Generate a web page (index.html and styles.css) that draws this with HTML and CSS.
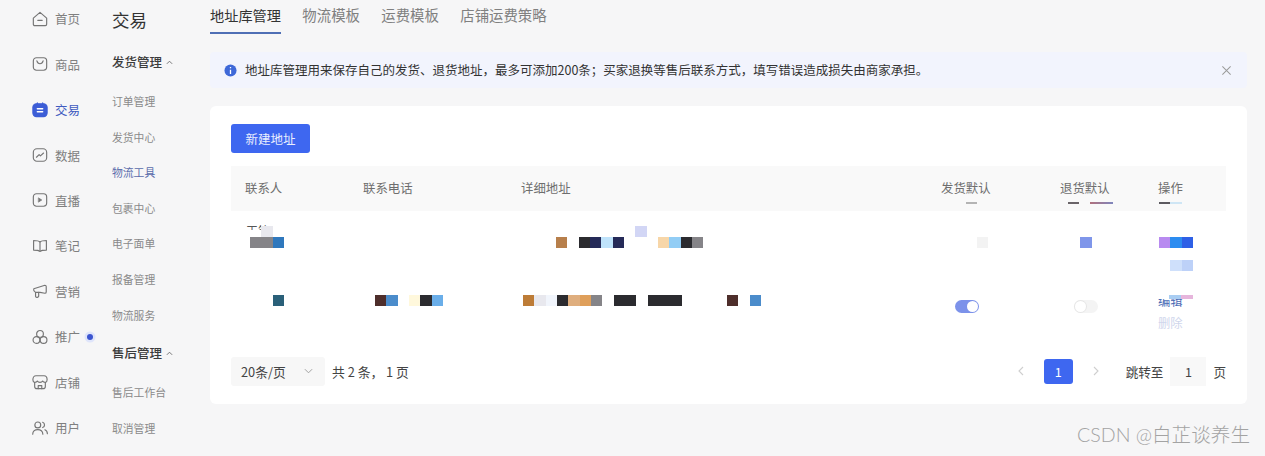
FILE: index.html
```html
<!DOCTYPE html>
<html lang="en">
<head>
    <meta charset="UTF-8">
    <meta name="viewport" content="width=device-width, initial-scale=1.0">
    <title>地址库管理</title>
    <link rel="stylesheet" href="styles.css">
</head>
<body>
    <div class="app">
        <!-- Left rail -->
        <nav class="rail">
            <a class="rail-item"><svg viewBox="0 0 18 18"><path d="M1.5 8 9 1.5 16.5 8v7a1.5 1.5 0 0 1-1.5 1.5H3A1.5 1.5 0 0 1 1.5 15z"/><path d="M6.5 10.5h5"/></svg>首页</a>
            <a class="rail-item"><svg viewBox="0 0 18 18"><rect x="1.5" y="2" width="15" height="14" rx="3.5"/><path d="M5.5 5.5c.6 2.2 1.8 3.2 3.5 3.2s2.9-1 3.5-3.2"/></svg>商品</a>
            <a class="rail-item active"><svg viewBox="0 0 18 18"><rect class="solid" x="1" y="2" width="16" height="14.5" rx="4"/><path class="bars" d="M6 7.5h6M6 11h6"/><path class="solid-line" d="M6 1v2M12 1v2"/></svg>交易</a>
            <a class="rail-item"><svg viewBox="0 0 18 18"><rect x="1.5" y="2" width="15" height="14" rx="4"/><path d="M5 11.5 8 8.5l1.5 1.5L13 6.8"/></svg>数据</a>
            <a class="rail-item"><svg viewBox="0 0 18 18"><rect x="1.5" y="2" width="15" height="14" rx="3.5"/><path class="tri" d="M7.5 6.8 11 9l-3.5 2.2z"/></svg>直播</a>
            <a class="rail-item"><svg viewBox="0 0 18 18"><path d="M9 4.5C7.5 3 5 2.8 1.800 2.8v10.800C5 13.600 7.5 13.800 9 15c1.5-1.200 4-1.400 7.200-1.400V2.800C13 2.800 10.500 3 9 4.500z"/><path d="M9 4.5V15"/></svg>笔记</a>
            <a class="rail-item"><svg viewBox="0 0 18 18"><path d="M2 6.5 14.5 2.500c1 0 1.500 .5 1.500 1.500v6c0 1-.5 1.500-1.500 1.500L9 10.500H5C3 10.500 1.500 8.500 2 6.500z"/><path d="M4 10.500V15c0 1 1.500 1.500 2.500 1l1-1V10.500"/></svg>营销</a>
            <a class="rail-item"><svg viewBox="0 0 18 18"><circle cx="9" cy="5.5" r="3.8"/><circle cx="5" cy="12.3" r="3.8"/><circle cx="13" cy="12.3" r="3.8"/></svg>推广<i class="dot"></i></a>
            <a class="rail-item"><svg viewBox="0 0 18 18"><path d="M4.500 2h9c2 0 3.500 2 3.500 4.500 0 1.500-1 2.800-2 3V14a2.500 2.500 0 0 1-2.500 2.500h-7A2.500 2.500 0 0 1 3 14V9.500c-1-.2-2-1.500-2-3C1 4 2.500 2 4.500 2z"/><path d="M3 9.500c1.500 0 2.500-.5 3-1.500.5 1 1.500 1.500 3 1.500s2.500-.5 3-1.500c.5 1 1.500 1.500 3 1.500M7 16.500v-3.500h4v3.500"/></svg>店铺</a>
            <a class="rail-item"><svg viewBox="0 0 18 18"><circle cx="6.5" cy="5.5" r="3.3"/><path d="M.8 16c0-3.500 2.500-5.200 5.700-5.200s5.700 1.700 5.700 5.200"/><path d="M12 2.500a3.200 3.200 0 0 1 0 6M14.500 11c1.800.8 2.800 2.400 2.800 4.500"/></svg>用户</a>
        </nav>

        <!-- Second level menu -->
        <aside class="submenu">
            <h2>交易</h2>
            <h3 class="group">发货管理<svg class="caret" viewBox="0 0 8 5"><path d="M1 4 4 1l3 3"/></svg></h3>
            <a>订单管理</a>
            <a>发货中心</a>
            <a class="current">物流工具</a>
            <a>包裹中心</a>
            <a>电子面单</a>
            <a>报备管理</a>
            <a>物流服务</a>
            <h3 class="group">售后管理<svg class="caret" viewBox="0 0 8 5"><path d="M1 4 4 1l3 3"/></svg></h3>
            <a>售后工作台</a>
            <a>取消管理</a>
        </aside>

        <main class="main">
            <div class="tabs">
                <a class="tab active">地址库管理</a>
                <a class="tab">物流模板</a>
                <a class="tab">运费模板</a>
                <a class="tab">店铺运费策略</a>
            </div>

            <div class="notice">
                <svg class="info" viewBox="0 0 14 14"><circle cx="7" cy="7" r="6.5"/><path d="M7 3.3v1.400M7 6.200v4.500"/></svg>
                <span>地址库管理用来保存自己的发货、退货地址，最多可添加200条；买家退换等售后联系方式，填写错误造成损失由商家承担。</span>
                <svg class="close" viewBox="0 0 12 12"><path d="M1.5 1.5l9 9M10.5 1.5l-9 9"/></svg>
            </div>

            <section class="card">
                <button class="btn-primary">新建地址</button>

                <div class="table-head">
                    <span class="col-name">联系人</span>
                    <span class="col-phone">联系电话</span>
                    <span class="col-addr">详细地址</span>
                    <span class="col-send">发货默认<i class="dash dash-send"></i></span>
                    <span class="col-back">退货默认<i class="dash dash-back1"></i><i class="dash dash-back2"></i></span>
                    <span class="col-op">操作<i class="dash dash-op1"></i><i class="dash dash-op2"></i></span>
                </div>

                <!-- Rows are blurred with mosaic tiles in the original -->
                <div class="row row-one">
                    <div class="col-name cell">
                        <div class="scrap">王笔</div>
                        <div class="mosaic"><i class="gap"></i><i class="m-mist"></i></div>
                        <div class="mosaic"><i class="m-grey"></i><i class="m-grey"></i><i class="m-blue"></i></div>
                    </div>
                    <div class="col-phone cell"></div>
                    <div class="col-addr cell">
                        <div class="mosaic"><i class="gap"></i><i class="gap"></i><i class="gap"></i><i class="gap"></i><i class="gap"></i><i class="gap"></i><i class="gap"></i><i class="gap"></i><i class="gap"></i><i class="gap"></i><i class="m-lilac"></i></div>
                        <div class="mosaic"><i class="gap"></i><i class="gap"></i><i class="gap"></i><i class="m-tan"></i><i class="gap"></i><i class="m-dark"></i><i class="m-navy"></i><i class="m-sky"></i><i class="m-navy"></i><i class="gap"></i><i class="gap"></i><i class="gap"></i><i class="m-peach"></i><i class="m-cyan"></i><i class="m-dark"></i><i class="m-grey"></i></div>
                    </div>
                    <div class="col-send cell"><div class="mosaic"><i class="gap"></i><i class="gap"></i><i class="gap"></i><i class="m-faint"></i></div></div>
                    <div class="col-back cell"><div class="mosaic"><i class="gap"></i><i class="m-peri"></i></div></div>
                    <div class="col-op cell">
                        <div class="mosaic"><i class="m-purple"></i><i class="m-azure"></i><i class="m-royal"></i></div>
                        <div class="mosaic"><i class="gap"></i><i class="m-pale"></i><i class="m-pale2"></i></div>
                    </div>
                </div>

                <div class="row row-two">
                    <div class="col-name cell"><div class="mosaic"><i class="gap"></i><i class="gap"></i><i class="m-teal"></i></div></div>
                    <div class="col-phone cell"><div class="mosaic"><i class="m-brown"></i><i class="m-blue2"></i><i class="gap"></i><i class="m-cream"></i><i class="m-dark"></i><i class="m-sky2"></i></div></div>
                    <div class="col-addr cell"><div class="mosaic"><i class="m-tan2"></i><i class="m-mist"></i><i class="m-ice"></i><i class="m-dark"></i><i class="m-sand"></i><i class="m-amber"></i><i class="m-grey"></i><i class="gap"></i><i class="m-dark"></i><i class="m-dark"></i><i class="gap"></i><i class="m-dark"></i><i class="m-dark"></i><i class="m-dark"></i><i class="gap"></i><i class="gap"></i><i class="gap"></i><i class="gap"></i><i class="m-brown"></i><i class="gap"></i><i class="m-blue2"></i></div></div>
                    <div class="col-send cell"><div class="switch on"><b></b></div></div>
                    <div class="col-back cell"><div class="switch"><b></b></div></div>
                    <div class="col-op cell ops">
                        <div class="op-cover"><i class="gap"></i><i class="c-blue"></i><i class="c-pink"></i></div>
                        <a class="op-edit">编辑</a>
                        <a class="op-del">删除</a>
                    </div>
                </div>

                <div class="pager">
                    <div class="size-select">20条/页<svg viewBox="0 0 10 6"><path d="M1 1l4 4 4-4"/></svg></div>
                    <span class="total">共 2 条， 1 页</span>
                    <div class="pages">
                        <svg class="arrow" viewBox="0 0 6 10"><path d="M5 1 1 5l4 4"/></svg>
                        <a class="page-num">1</a>
                        <svg class="arrow" viewBox="0 0 6 10"><path d="M1 1l4 4-4 4"/></svg>
                        <span class="jump">跳转至</span>
                        <span class="jump-input">1</span>
                        <span>页</span>
                    </div>
                </div>
            </section>
        </main>
    </div>

    <div class="watermark">CSDN @白芷谈养生</div>
</body>
</html>
```

FILE: styles.css
```css
* {
    box-sizing: border-box;
}
html, body {
    height: 100%;
}
body {
    margin: 0;
    background: #f6f6f7;
    color: #333;
    font-family: "Noto Sans CJK SC", "Noto Sans", sans-serif;
    overflow: hidden;
    position: relative;
}
.app {
    display: flex;
    height: 456px;
    overflow: hidden;
}

/* left rail */
.rail {
    width: 112px;
    flex: none;
    padding: 0 0 0 32px;
    display: flex;
    flex-direction: column;
}
.rail-item {
    height: 45.44px;
    flex: none;
    display: flex;
    align-items: center;
    font-size: 12.5px;
    color: #7f7f7f;
    position: relative;
    top: -4px;
}
.rail-item svg {
    width: 16px;
    height: 16px;
    margin-right: 7px;
    fill: none;
    stroke: #757575;
    stroke-width: 1.3;
    stroke-linecap: round;
    stroke-linejoin: round;
}
.rail-item.active {
    color: #3f5bc0;
}
.rail-item .solid {
    fill: #3c5dd6;
    stroke: #3c5dd6;
}
.rail-item .solid-line {
    stroke: #3c5dd6;
}
.rail-item .bars {
    stroke: #fff;
    stroke-width: 1.6;
}
.rail-item .tri {
    fill: #757575;
    stroke-width: .8;
}
.dot {
    position: absolute;
    left: 55px;
    top: 20px;
    width: 6px;
    height: 6px;
    border-radius: 50%;
    background: #3c55d0;
    box-shadow: 0 0 0 2.5px #dfe5fb;
}

/* second menu */
.submenu {
    width: 98px;
    flex: none;
    display: flex;
    flex-direction: column;
}
.submenu h2 {
    margin: 6px 0 0;
    font-size: 17.5px;
    line-height: 28px;
    font-weight: 400;
    color: #333;
}
.submenu .group {
    margin: 2px 0 22px;
    font-size: 12.5px;
    line-height: 18px;
    font-weight: 500;
    color: #3b3b3b;
    display: flex;
    align-items: center;
}
.submenu h2 + .group {
    margin: 19px 0 22px;
}
.caret {
    width: 7px;
    height: 5px;
    margin-left: 4px;
    fill: none;
    stroke: #666;
    stroke-width: 1;
}
.submenu a {
    height: 35.6px;
    flex: none;
    font-size: 10.8px;
    line-height: 16px;
    color: #8a8a8a;
}
.submenu a.current {
    color: #5a6cab;
}

/* main column */
.main {
    width: 1037px;
    flex: none;
    display: flex;
    flex-direction: column;
}
.tabs {
    display: flex;
    gap: 21.4px;
    height: 34px;
    flex: none;
}
.tab {
    font-size: 14.4px;
    line-height: 30px;
    color: #808080;
    height: 34px;
}
.tab.active {
    font-size: 14.2px;
    color: #333;
    border-bottom: 2px solid #4f6fb5;
}

.notice {
    margin-top: 18px;
    height: 36px;
    flex: none;
    background: #f2f4fd;
    border-radius: 4px;
    display: flex;
    align-items: center;
    padding: 0 15px 0 14px;
    font-size: 12.5px;
    color: #333;
}
.info {
    width: 13px;
    height: 13px;
    flex: none;
    margin-right: 8px;
}
.info circle {
    fill: #3e68d8;
}
.info path {
    stroke: #fff;
    stroke-width: 1.4;
}
.notice span {
    flex: 1;
    position: relative;
    top: -1px;
}
.close {
    width: 11px;
    height: 11px;
    fill: none;
    stroke: #9a9a9a;
    stroke-width: 1.1;
}

.card {
    margin-top: 18px;
    height: 298px;
    flex: none;
    background: #fff;
    border-radius: 6px;
    padding: 18px 21px 0;
    display: flex;
    flex-direction: column;
    position: relative;
}
.btn-primary {
    width: 79px;
    height: 29px;
    flex: none;
    border: 0;
    border-radius: 3px;
    padding: 0;
    background: #3e67f0;
    color: #e9eefe;
    font: 12.5px "Noto Sans CJK SC", sans-serif;
}

/* table, columns share the same widths */
.table-head, .row {
    display: flex;
    width: 995px;
    padding-left: 14px;
}
.col-name { width: 118px; flex: none; }
.col-phone { width: 158px; flex: none; }
.col-addr { width: 420px; flex: none; }
.col-send { width: 119px; flex: none; }
.col-back { width: 98px; flex: none; }
.col-op { width: 82px; flex: none; }

.table-head {
    margin-top: 13px;
    height: 45px;
    flex: none;
    padding-bottom: 2px;
    align-items: center;
    background: #f9f9f9;
    font-size: 12.4px;
    color: #6e6e6e;
}
.table-head span {
    position: relative;
}

/* leftovers of text showing below the mosaic */
.dash {
    position: absolute;
    top: 23px;
    height: 2px;
}
.dash-send { left: 25px; width: 11px; background: #b4b4b4; }
.dash-back1 { left: 8px; width: 11px; background: #6a6468; }
.dash-back2 { left: 30px; width: 23px; background: linear-gradient(90deg, #b0707c, #7f86bd); }
.dash-op1 { left: 1px; width: 11px; background: #5c5a60; }
.dash-op2 { left: 12px; width: 12px; background: #cfe6f5; }

.row {
    flex: none;
}
.row-one {
    height: 65px;
    padding-top: 14.7px;
}
.row-two {
    height: 76px;
    padding-top: 18.5px;
}
.cell {
    display: flex;
    flex-direction: column;
    position: relative;
}

/* mosaic tiles */
.mosaic {
    display: flex;
    height: 11.33px;
    flex: none;
    position: relative;
}
.mosaic i {
    width: 11.33px;
    height: 11.33px;
    flex: none;
}
.col-name .mosaic {
    margin-left: 5px;
}
.scrap {
    position: absolute;
    left: 1px;
    top: -2px;
    font-size: 12px;
    line-height: 14px;
    color: #555;
}
.scrap::after {
    content: "";
    position: absolute;
    left: -2px;
    top: 6px;
    width: 30px;
    height: 10px;
    background: #fff;
}
.col-addr .mosaic {
    margin-left: 1px;
}
.row-one .col-send,
.row-one .col-back,
.row-one .col-op {
    padding-top: 11.33px;
}
.row-one .col-send .mosaic {
    margin-left: 2px;
}
.row-one .col-back .mosaic {
    margin-left: 9px;
}
.row-one .col-op .mosaic {
    margin-left: 1px;
}
.row-one .col-op .mosaic + .mosaic {
    margin-top: 11.3px;
}
.row-two .col-phone .mosaic {
    margin-left: 12px;
}
.row-two .col-addr .mosaic {
    margin-left: 2px;
}
.gap { background: transparent; }
.m-grey { background: #858488; }
.m-blue { background: #2f78bd; }
.m-lilac { background: #d2d6f5; }
.m-tan { background: #b77f4b; }
.m-dark { background: #2b2b2f; }
.m-navy { background: #252a58; }
.m-sky { background: #bfe3fb; }
.m-peach { background: #f7d6a8; }
.m-cyan { background: #92cdf5; }
.m-faint { background: #f3f3f3; }
.m-peri { background: #7f96ea; }
.m-purple { background: #b88af0; }
.m-azure { background: #2c8cf0; }
.m-royal { background: #2e60e6; }
.m-pale { background: #cfe0fb; }
.m-pale2 { background: #bdd1f8; }
.m-teal { background: #2a6079; }
.m-brown { background: #4e2e2b; }
.m-blue2 { background: #4b8ccb; }
.m-cream { background: #fff8dc; }
.m-sky2 { background: #6aaee9; }
.m-tan2 { background: #bd7c37; }
.m-mist { background: #e8e8ee; }
.m-ice { background: #f1f5fc; }
.m-sand { background: #dfae7e; }
.m-amber { background: #df9f5a; }

/* switches */
.switch {
    width: 24px;
    height: 13px;
    border-radius: 7px;
    background: #f4f4f4;
    margin: 5px 0 0 14px;
    position: relative;
}
.switch b {
    position: absolute;
    left: 1px;
    top: 1px;
    width: 11px;
    height: 11px;
    border-radius: 50%;
    background: #fff;
    box-shadow: 0 0 0 1px #e6e6e6;
}
.switch.on {
    background: #7c92ea;
}
.switch.on b {
    left: 12px;
    box-shadow: none;
}
.ops {
    font-size: 12.3px;
    line-height: 12px;
}
.op-cover {
    position: absolute;
    left: -1px;
    top: 0;
    width: 36px;
    height: 4px;
    display: flex;
    background: #fff;
}
.op-cover i {
    width: 12px;
    height: 4px;
    flex: none;
}
.c-blue { background: #a9cdf2; }
.c-pink { background: #e6b5dc; }
.op-edit {
    color: #4a6bb5;
}
.op-del {
    margin-top: 10.5px;
    color: #cfd6ec;
}

/* pager */
.pager {
    display: flex;
    align-items: center;
    height: 30px;
    flex: none;
    margin-top: 4px;
    font-size: 12.6px;
    color: #444;
}
.size-select {
    width: 94px;
    height: 29px;
    background: #f7f7f7;
    border-radius: 3px;
    display: flex;
    align-items: center;
    justify-content: space-between;
    padding: 0 12px 0 10px;
    font-size: 12.8px;
}
.size-select svg {
    width: 9px;
    height: 6px;
    fill: none;
    stroke: #999;
    stroke-width: 1;
}
.total {
    margin-left: 7px;
    font-size: 12.8px;
}
.pages {
    margin-left: auto;
    display: flex;
    align-items: center;
}
.arrow {
    width: 6px;
    height: 10px;
    fill: none;
    stroke: #cfcfcf;
    stroke-width: 1.1;
}
.page-num {
    width: 29px;
    height: 25px;
    margin: 0 20px;
    background: #3e67f0;
    border-radius: 3px;
    color: #fff;
    text-align: center;
    line-height: 25px;
}
.jump {
    margin-left: 27px;
}
.jump-input {
    width: 36px;
    height: 29px;
    margin: 0 7px;
    background: #f8f8f8;
    text-align: center;
    line-height: 29px;
}

.watermark {
    position: absolute;
    right: 15px;
    top: 422px;
    font-size: 19.6px;
    line-height: 26px;
    font-weight: 300;
    color: #a3a3a3;
    font-family: "Lato", "Noto Sans CJK SC", sans-serif;
}
```
